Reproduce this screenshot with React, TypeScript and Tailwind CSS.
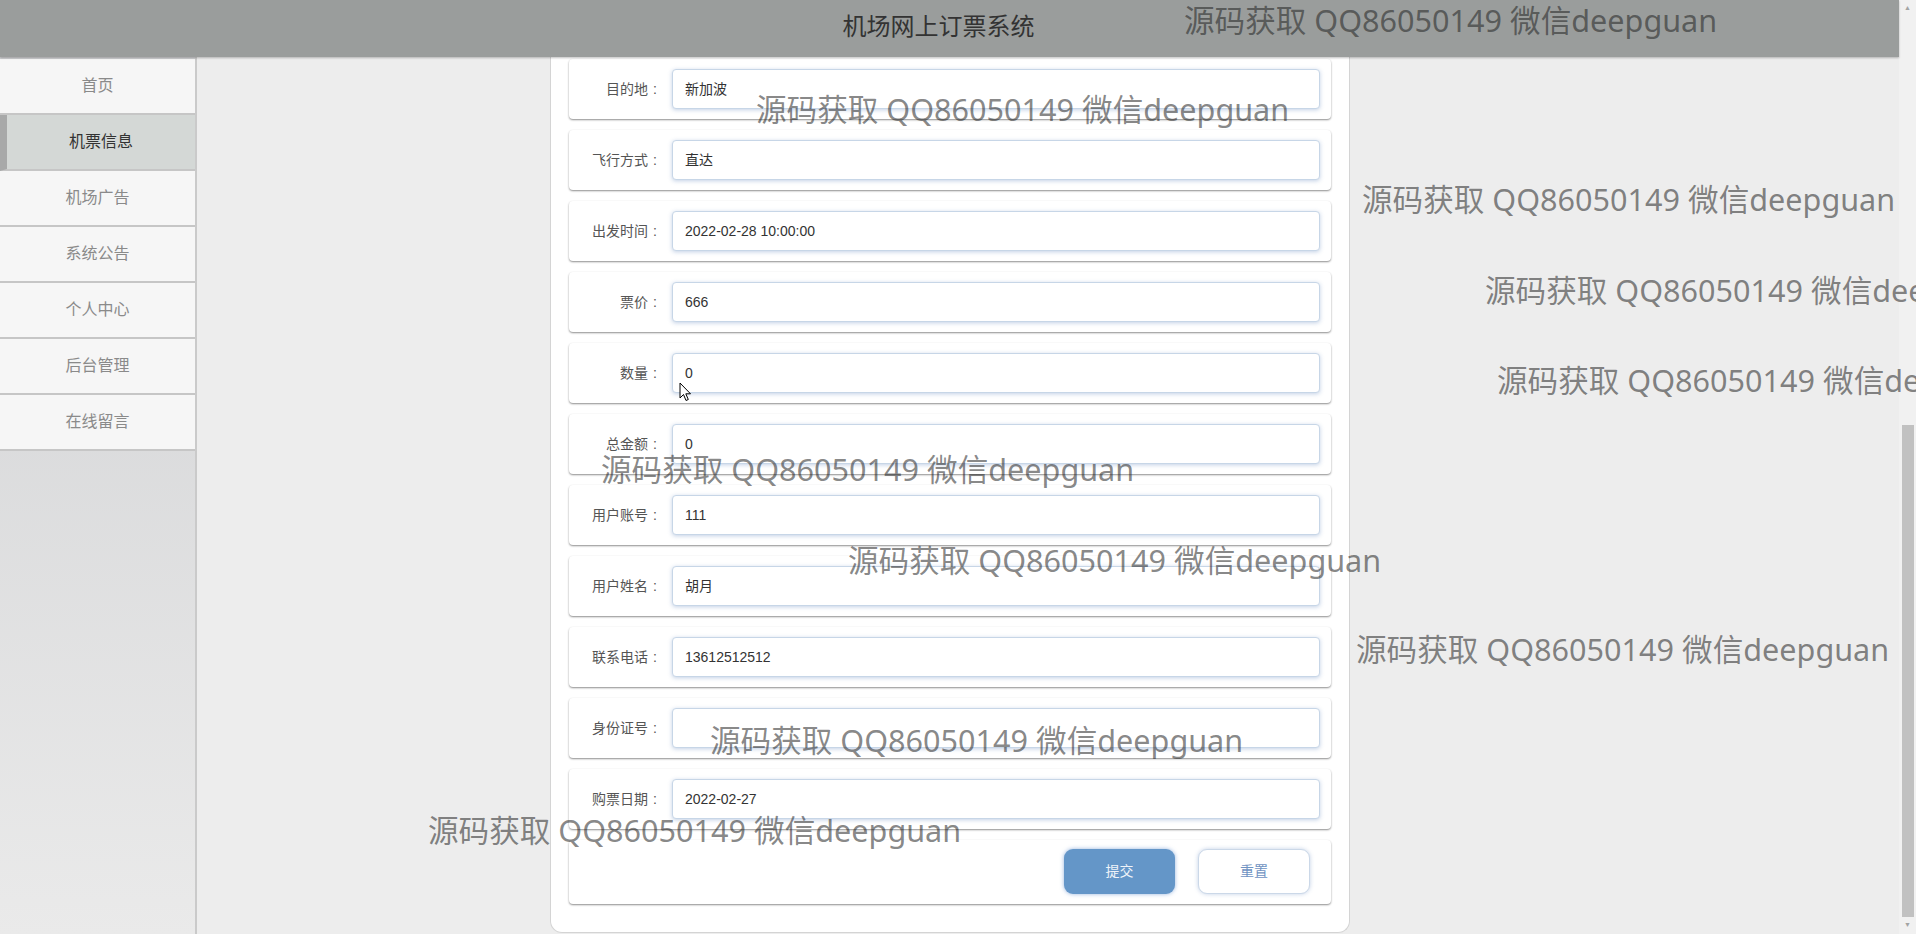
import React from 'react';

// ─── Données ──────────────────────────────────────────────────────────────────

const MENU = ['首页', '机票信息', '机场广告', '系统公告', '个人中心', '后台管理', '在线留言'];
const ACTIVE = '机票信息';

const FIELDS: { label: string; value: string }[] = [
  { label: '目的地', value: '新加波' },
  { label: '飞行方式', value: '直达' },
  { label: '出发时间', value: '2022-02-28 10:00:00' },
  { label: '票价', value: '666' },
  { label: '数量', value: '0' },
  { label: '总金额', value: '0' },
  { label: '用户账号', value: '111' },
  { label: '用户姓名', value: '胡月' },
  { label: '联系电话', value: '13612512512' },
  { label: '身份证号', value: '' },
  { label: '购票日期', value: '2022-02-27' },
];

const MARKS: { left: string; top: string }[] = [
  { left: 'left-[1184px]', top: 'top-[5px]' },
  { left: 'left-[756px]', top: 'top-[94px]' },
  { left: 'left-[1362px]', top: 'top-[184px]' },
  { left: 'left-[1485px]', top: 'top-[275px]' },
  { left: 'left-[1497px]', top: 'top-[365px]' },
  { left: 'left-[601px]', top: 'top-[454px]' },
  { left: 'left-[848px]', top: 'top-[545px]' },
  { left: 'left-[1356px]', top: 'top-[634px]' },
  { left: 'left-[710px]', top: 'top-[725px]' },
  { left: 'left-[428px]', top: 'top-[815px]' },
];

const WATERMARK = '源码获取 QQ86050149 微信deepguan';

// ─── Menu latéral ─────────────────────────────────────────────────────────────

function Sidebar() {
  return (
    <aside className="w-[197px] shrink-0 flex flex-col pt-[2px] border-r-2 border-[#cacaca] bg-gradient-to-b from-[#d0d1d3] to-[#eaeaea]">
      {MENU.map((item) => {
        const active = item === ACTIVE;
        return (
          <div
            key={item}
            className={
              active
                ? 'h-[56px] flex items-center justify-center border-b-2 border-l-[7px] border-b-[#c6c6c6] border-l-[#a8a9a9] bg-[#d4d8d6] text-[16px] text-[#333]'
                : 'h-[56px] flex items-center justify-center border-b-2 border-[#c6c6c6] bg-[#f6f6f6] text-[16px] text-[#8a8a8a]'
            }
          >
            {item}
          </div>
        );
      })}
    </aside>
  );
}

// ─── Formulaire ───────────────────────────────────────────────────────────────

function FieldRow({ label, value }: { label: string; value: string }) {
  return (
    <div className="h-[60px] mb-[11px] flex items-center rounded-[4px] bg-white pr-[11px] shadow-[0_1px_2px_rgba(0,0,0,0.45)]">
      <div className="w-[91px] shrink-0 text-right text-[14px] text-[#555]">
        {label}
        <span className="ml-[5px] mr-[3px]">:</span>
      </div>
      <div className="ml-[12px] flex-1 h-[40px] flex items-center pl-[12px] rounded-[4px] border border-[#c7d6e7] bg-white text-[14px] text-[#333] shadow-[0_1px_4px_rgba(80,120,180,0.35)]">
        {value}
      </div>
    </div>
  );
}

function TicketForm() {
  return (
    <div className="ml-[353px] w-[800px] self-start bg-white border-x border-b border-[#d4d4d4] rounded-b-[12px] px-[18px] pt-[2px] pb-[28px]">
      {FIELDS.map((f) => (
        <FieldRow key={f.label} label={f.label} value={f.value} />
      ))}
      <div className="h-[64px] flex justify-end items-start gap-[23px] pt-[9px] pr-[21px] rounded-[4px] bg-white shadow-[0_1px_2px_rgba(0,0,0,0.45)]">
        <button className="w-[111px] h-[45px] rounded-[9px] bg-[#6496c8] text-[14px] text-[#eef3f9] shadow-[0_0_4px_rgba(80,130,200,0.6)]">
          提交
        </button>
        <button className="w-[112px] h-[45px] rounded-[9px] border border-[#cbd8e8] bg-white text-[14px] text-[#6f93c2] shadow-[0_0_4px_rgba(120,150,200,0.45)]">
          重置
        </button>
      </div>
    </div>
  );
}

// ─── Barre de défilement ──────────────────────────────────────────────────────

function ScrollBar() {
  return (
    <div className="w-[17px] shrink-0 flex flex-col items-center bg-[#f1f1f1]">
      <div className="h-[17px] flex items-center justify-center text-[7px] text-[#a3a3a3]">▲</div>
      <div className="h-[408px]" />
      <div className="w-[12px] h-[492px] bg-[#c1c1c1]" />
      <div className="flex-1" />
      <div className="h-[17px] flex items-center justify-center text-[7px] text-[#a3a3a3]">▼</div>
    </div>
  );
}

// ─── Page ─────────────────────────────────────────────────────────────────────

export default function App() {
  return (
    <div className="relative h-[934px] w-full overflow-hidden flex bg-[#ededed] font-['Liberation_Sans','Noto_Sans_CJK_SC',sans-serif]">
      <div className="flex-1 min-w-0 flex flex-col">
        <header className="relative z-10 h-[57px] shrink-0 flex items-center justify-center pr-[22px] bg-[#9a9d9c] shadow-[0_1px_2px_rgba(0,0,0,0.25)]">
          <span className="text-[24px] text-[#333] -mt-[4px]">机场网上订票系统</span>
        </header>
        <div className="flex-1 flex min-h-0">
          <Sidebar />
          <TicketForm />
        </div>
      </div>
      <ScrollBar />

      {/* curseur de la souris */}
      <svg className="absolute left-[679px] top-[382px] z-20" width="13" height="20" viewBox="0 0 13 20">
        <path d="M1 1 L1 16 L4.5 12.5 L7 18.5 L9.3 17.5 L6.8 11.8 L11.5 11.8 Z" fill="#fff" stroke="#000" strokeWidth="1" strokeLinejoin="round" />
      </svg>

      {MARKS.map((m, i) => (
        <div
          key={i}
          className={`absolute ${m.left} ${m.top} z-30 whitespace-nowrap leading-none text-[30.6px] text-[rgba(33,33,33,0.55)] font-['Noto_Sans','Noto_Sans_CJK_SC',sans-serif] pointer-events-none`}
        >
          {WATERMARK}
        </div>
      ))}
    </div>
  );
}
